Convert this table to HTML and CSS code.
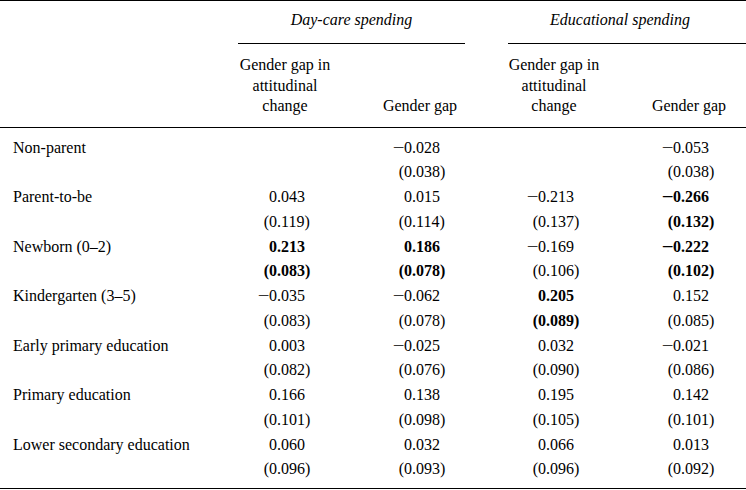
FILE: index.html
```html
<!DOCTYPE html>
<html>
<head>
<meta charset="utf-8">
<link rel="stylesheet" href="styles.css">
</head>
<body>
<table class="tbl">
  <colgroup>
    <col class="w-label"><col class="w-c1"><col class="w-c2"><col class="w-c3"><col class="w-c4">
  </colgroup>
  <thead>
    <tr class="grp-row">
      <th></th>
      <th colspan="2"><div class="group g1">Day-care spending</div></th>
      <th colspan="2"><div class="group g2">Educational spending</div></th>
    </tr>
    <tr class="sub-row">
      <th></th>
      <th class="h c1">Gender gap in<br>attitudinal<br>change</th>
      <th class="h c2">Gender gap</th>
      <th class="h c3">Gender gap in<br>attitudinal<br>change</th>
      <th class="h c4">Gender gap</th>
    </tr>
  </thead>
  <tbody>
    <tr class="first"><td class="lab">Non-parent</td><td></td><td><span class="i"><span class="m">−</span>0</span>.028</td><td></td><td><span class="i"><span class="m">−</span>0</span>.053</td></tr>
    <tr><td></td><td></td><td><span class="i">(0</span>.038)</td><td></td><td><span class="i">(0</span>.038)</td></tr>
    <tr><td class="lab">Parent-to-be</td><td><span class="i">0</span>.043</td><td><span class="i">0</span>.015</td><td><span class="i"><span class="m">−</span>0</span>.213</td><td class="b"><span class="i"><span class="m">−</span>0</span>.266</td></tr>
    <tr><td></td><td><span class="i">(0</span>.119)</td><td><span class="i">(0</span>.114)</td><td><span class="i">(0</span>.137)</td><td class="b"><span class="i">(0</span>.132)</td></tr>
    <tr><td class="lab">Newborn (0–2)</td><td class="b"><span class="i">0</span>.213</td><td class="b"><span class="i">0</span>.186</td><td><span class="i"><span class="m">−</span>0</span>.169</td><td class="b"><span class="i"><span class="m">−</span>0</span>.222</td></tr>
    <tr><td></td><td class="b"><span class="i">(0</span>.083)</td><td class="b"><span class="i">(0</span>.078)</td><td><span class="i">(0</span>.106)</td><td class="b"><span class="i">(0</span>.102)</td></tr>
    <tr><td class="lab">Kindergarten (3–5)</td><td><span class="i"><span class="m">−</span>0</span>.035</td><td><span class="i"><span class="m">−</span>0</span>.062</td><td class="b"><span class="i">0</span>.205</td><td><span class="i">0</span>.152</td></tr>
    <tr><td></td><td><span class="i">(0</span>.083)</td><td><span class="i">(0</span>.078)</td><td class="b"><span class="i">(0</span>.089)</td><td><span class="i">(0</span>.085)</td></tr>
    <tr><td class="lab">Early primary education</td><td><span class="i">0</span>.003</td><td><span class="i"><span class="m">−</span>0</span>.025</td><td><span class="i">0</span>.032</td><td><span class="i"><span class="m">−</span>0</span>.021</td></tr>
    <tr><td></td><td><span class="i">(0</span>.082)</td><td><span class="i">(0</span>.076)</td><td><span class="i">(0</span>.090)</td><td><span class="i">(0</span>.086)</td></tr>
    <tr><td class="lab">Primary education</td><td><span class="i">0</span>.166</td><td><span class="i">0</span>.138</td><td><span class="i">0</span>.195</td><td><span class="i">0</span>.142</td></tr>
    <tr><td></td><td><span class="i">(0</span>.101)</td><td><span class="i">(0</span>.098)</td><td><span class="i">(0</span>.105)</td><td><span class="i">(0</span>.101)</td></tr>
    <tr><td class="lab">Lower secondary education</td><td><span class="i">0</span>.060</td><td><span class="i">0</span>.032</td><td><span class="i">0</span>.066</td><td><span class="i">0</span>.013</td></tr>
    <tr class="last"><td></td><td><span class="i">(0</span>.096)</td><td><span class="i">(0</span>.093)</td><td><span class="i">(0</span>.096)</td><td><span class="i">(0</span>.092)</td></tr>
  </tbody>
</table>
</body>
</html>
```
FILE: styles.css
```css
html, body {
  margin: 0;
  padding: 0;
  background: #fff;
}
body {
  font-family: "Liberation Serif", "Times New Roman", serif;
  font-size: 16px;
  color: #000;
}
.tbl {
  width: 746px;
  table-layout: fixed;
  border-collapse: collapse;
  border-top: 1px solid #000;
  border-bottom: 1px solid #000;
}
.w-label { width: 237px; }
.w-c1 { width: 135px; }
.w-c2 { width: 134px; }
.w-c3 { width: 135px; }
.w-c4 { width: 105px; }

th, td {
  padding: 0;
  font-weight: normal;
  white-space: nowrap;
}
.grp-row th {
  vertical-align: top;
}
.group {
  font-style: italic;
  line-height: 20px;
  padding: 9px 0 13px;
  border-bottom: 1px solid #000;
  text-align: center;
}
.g1 { margin: 0 41px 0 1px; }
.g2 { margin: 0 0 0 2px; padding-right: 14px; }

.sub-row th {
  line-height: 20.5px;
  padding-top: 11px;
  padding-bottom: 10.5px;
  border-bottom: 1px solid #000;
  vertical-align: bottom;
  text-align: center;
}
.h.c1, .h.c3 { padding-right: 39px; }
.h.c2 { padding-right: 38px; }
.h.c4 { padding-right: 9px; }

tbody td {
  line-height: 24.77px;
  text-align: left;
}
tbody tr.first td { padding-top: 7.5px; }
tbody tr.last td { padding-bottom: 6px; }
td.lab { padding-left: 13px; }
td.b { font-weight: bold; }
.i {
  display: inline-block;
  width: 40px;
  text-align: right;
}
.m {
  display: inline-block;
  transform: scaleX(1.3);
  margin-right: 1px;
}
```
